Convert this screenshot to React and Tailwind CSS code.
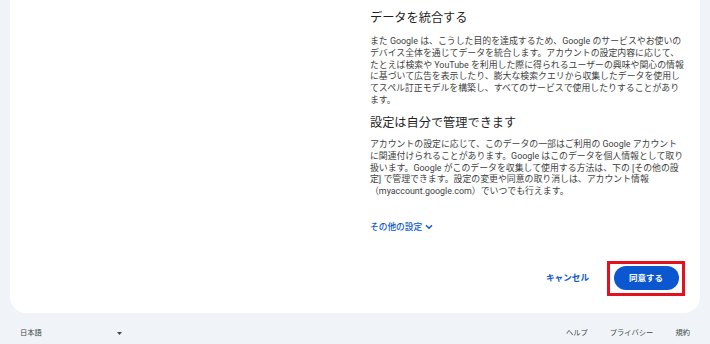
import React from 'react';

const font = { fontFamily: 'Roboto, "Noto Sans CJK JP", sans-serif' };

function Lines({ lines }) {
  return (
    <div className="text-[8.9px] leading-[11.7px] text-[#3c3f3e]">
      {lines.map((l, i) => (
        <div key={i} className="whitespace-nowrap">
          {l}
        </div>
      ))}
    </div>
  );
}

const merge = [
  'また Google は、こうした目的を達成するため、Google のサービスやお使いの',
  'デバイス全体を通じてデータを統合します。アカウントの設定内容に応じて、',
  'たとえば検索や YouTube を利用した際に得られるユーザーの興味や関心の情報',
  'に基づいて広告を表示したり、膨大な検索クエリから収集したデータを使用し',
  'てスペル訂正モデルを構築し、すべてのサービスで使用したりすることがあり',
  'ます。',
];

const manage = [
  'アカウントの設定に応じて、このデータの一部はご利用の Google アカウント',
  'に関連付けられることがあります。Google はこのデータを個人情報として取り',
  '扱います。Google がこのデータを収集して使用する方法は、下の [その他の設',
  '定] で管理できます。設定の変更や同意の取り消しは、アカウント情報',
  '（myaccount.google.com）でいつでも行えます。',
];

export default function App() {
  return (
    <div className="h-[344px] w-[710px] overflow-hidden bg-[#f0f4f9]" style={font}>
      {/* カード */}
      <div className="ml-[10px] flex h-[313px] w-[690px] rounded-b-[16px] bg-white">
        <div className="w-[360px]" />
        <div className="flex flex-1 flex-col pr-[15px]">
          <h2 className="mt-[9.5px] text-[12.2px] leading-[16px] text-[#1f1f1f]">データを統合する</h2>
          <div className="mt-[10.7px]">
            <Lines lines={merge} />
          </div>
          <h2 className="mt-[8.6px] text-[12.2px] leading-[16px] text-[#1f1f1f]">設定は自分で管理できます</h2>
          <div className="mt-[8.2px]">
            <Lines lines={manage} />
          </div>
          <button className="mt-[23px] flex h-[12px] items-center gap-[3px] self-start text-[8.7px] font-medium leading-[12px] text-[#0b57d0]">
            その他の設定
            <svg width="8" height="6" viewBox="0 0 8 6" fill="none">
              <path d="M1 1.2 4 4.2 7 1.2" stroke="#0b57d0" strokeWidth="1.4" />
            </svg>
          </button>

          {/* ボタン */}
          <div className="mt-[28px] flex items-center justify-end">
            <button className="mr-[18px] text-[8.6px] font-bold text-[#0b57d0]">キャンセル</button>
            <div className="flex h-[35px] w-[78px] items-center justify-center border-[3px] border-[#e5101e]">
              <button className="flex h-[24px] w-[65px] items-center justify-center rounded-full bg-[#0b57d0] text-[8.5px] font-bold text-white">
                同意する
              </button>
            </div>
          </div>
        </div>
      </div>

      {/* フッター */}
      <div className="flex h-[40px] items-center px-[20px] text-[7.3px] text-[#444746]">
        <div className="flex w-[102px] items-center justify-between">
          <span>日本語</span>
          <svg width="5" height="3" viewBox="0 0 5 3">
            <path d="M0 0h5L2.5 3z" fill="#444746" />
          </svg>
        </div>
        <div className="ml-auto flex gap-[22px]">
          <span>ヘルプ</span>
          <span>プライバシー</span>
          <span>規約</span>
        </div>
      </div>
    </div>
  );
}
